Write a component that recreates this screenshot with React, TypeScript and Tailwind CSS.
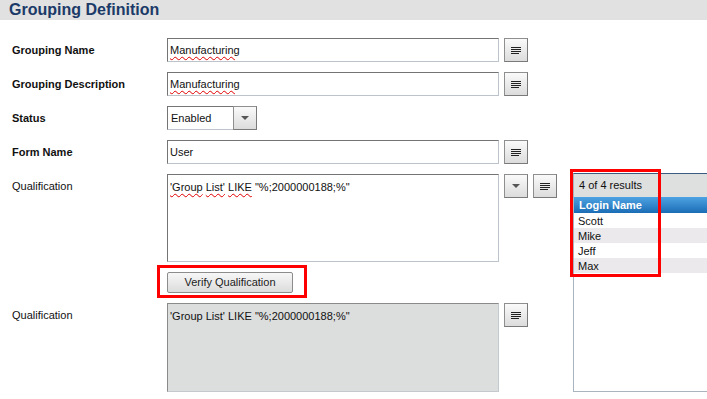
import React from 'react'

const LinesIcon = () => (
  <svg width="10" height="7" viewBox="0 0 10 7" className="block">
    <rect x="0" y="0" width="10" height="1" fill="#222" />
    <rect x="0" y="2" width="10" height="1" fill="#222" />
    <rect x="0" y="4" width="10" height="1" fill="#222" />
    <rect x="0" y="6" width="8" height="1" fill="#222" />
  </svg>
)

const ArrowIcon = () => (
  <svg width="8" height="4" viewBox="0 0 8 4" className="block">
    <polygon points="0,0 8,0 4,4" fill="#555" />
  </svg>
)

const IconButton = ({ children }: { children: React.ReactNode }) => (
  <div className="flex h-6 w-6 shrink-0 items-center justify-center border border-[#8f8f8f] border-r-[#7a7a7a] border-b-[#7a7a7a] bg-gradient-to-b from-[#fafafa] to-[#dcdcdc]">
    {children}
  </div>
)

const Spell = ({ children }: { children: React.ReactNode }) => (
  <span className="underline decoration-wavy decoration-[#e00000] decoration-1 underline-offset-2">{children}</span>
)

const fieldBorder =
  'border border-t-[#747474] border-l-[#747474] border-r-[#bcc3ca] border-b-[#bcc3ca]'

const Row = ({ label, bold = true, children }: { label: string; bold?: boolean; children: React.ReactNode }) => (
  <div className="flex h-6 items-center">
    <div className={`w-[167px] shrink-0 pl-3 ${bold ? 'font-bold' : ''}`}>{label}</div>
    {children}
  </div>
)

const users = ['Scott', 'Mike', 'Jeff', 'Max']

export default function App() {
  return (
    <div className="h-[399px] w-[707px] overflow-hidden bg-white font-['Liberation_Sans',Arial,sans-serif] text-[11px] text-[#111]">
      <div className="h-5 bg-[#e1e1e1] pl-[9px] text-[16px] font-bold leading-5 text-[#1b3a68]">
        Grouping Definition
      </div>

      <div className="mt-[18px] flex flex-col gap-[10px]">
        <Row label="Grouping Name">
          <div className={`flex h-6 w-[332px] items-center pl-[2px] ${fieldBorder}`}>
            <Spell>Manufacturing</Spell>
          </div>
          <div className="ml-[5px]">
            <IconButton>
              <LinesIcon />
            </IconButton>
          </div>
        </Row>

        <Row label="Grouping Description">
          <div className={`flex h-6 w-[332px] items-center pl-[2px] ${fieldBorder}`}>
            <Spell>Manufacturing</Spell>
          </div>
          <div className="ml-[5px]">
            <IconButton>
              <LinesIcon />
            </IconButton>
          </div>
        </Row>

        <Row label="Status">
          <div className={`flex h-6 w-[66px] items-center pl-[3px] ${fieldBorder} border-r-0`}>Enabled</div>
          <IconButton>
            <ArrowIcon />
          </IconButton>
        </Row>

        <Row label="Form Name">
          <div className={`flex h-6 w-[332px] items-center pl-[2px] ${fieldBorder}`}>User</div>
          <div className="ml-[5px]">
            <IconButton>
              <LinesIcon />
            </IconButton>
          </div>
        </Row>

        <div className="flex">
          <div className="flex w-[557px] flex-col">
            <div className="flex">
              <div className="w-[167px] shrink-0 pl-3 pt-[4px]">Qualification</div>
              <div className={`h-[88px] w-[332px] pl-[2px] pt-[4px] ${fieldBorder}`}>
                <Spell>'Group</Spell> <Spell>List'</Spell> <Spell>LIKE</Spell> "%;2000000188;%"
              </div>
              <div className="ml-[5px] flex gap-[5px]">
                <IconButton>
                  <ArrowIcon />
                </IconButton>
                <IconButton>
                  <LinesIcon />
                </IconButton>
              </div>
            </div>

            <div className="relative ml-[167px] mt-[10px] w-[126px]">
              <div className="flex h-[21px] w-[126px] items-center justify-center rounded-[2px] border border-[#8c8c8c] bg-gradient-to-b from-[#f7f7f7] to-[#dcdcdc] text-[#222]">
                Verify Qualification
              </div>
              <div className="pointer-events-none absolute -left-[10px] -top-[7px] h-[33px] w-[150px] border-[3px] border-[#ff0000]" />
            </div>

            <div className="mt-[10px] flex">
              <div className="w-[167px] shrink-0 pl-3 pt-[4px]">Qualification</div>
              <div className="h-[89px] w-[332px] border border-t-[#8a8a8a] border-l-[#8a8a8a] border-r-[#c4c9ce] border-b-[#c4c9ce] bg-[#dcdddd] pl-[2px] pt-[4px]">
                'Group List' LIKE "%;2000000188;%"
              </div>
              <div className="ml-[5px]">
                <IconButton>
                  <LinesIcon />
                </IconButton>
              </div>
            </div>
          </div>

          <div className="relative ml-[16px] -mt-px h-[219px] w-[160px] shrink-0 border-l border-b border-t border-l-[#a9b4be] border-b-[#a9b4be] border-t-[#3a5c80]">
            <div className="flex h-[23px] items-center bg-[#dedfdf] pl-[5px]">4 of 4 results</div>
            <div className="flex h-4 items-center bg-gradient-to-b from-[#4da3e2] to-[#1a6db5] pl-[5px] font-bold text-white">
              Login Name
            </div>
            {users.map((u, i) => (
              <div
                key={u}
                className={`flex h-[15px] items-center pl-[4px] pt-px ${i % 2 === 1 ? 'bg-[#ebe9ec]' : 'bg-white'}`}
              >
                {u}
              </div>
            ))}
            <div className="pointer-events-none absolute -left-[4px] -top-[5px] h-[108px] w-[91px] border-[3px] border-[#ff0000]" />
          </div>
        </div>
      </div>
    </div>
  )
}
